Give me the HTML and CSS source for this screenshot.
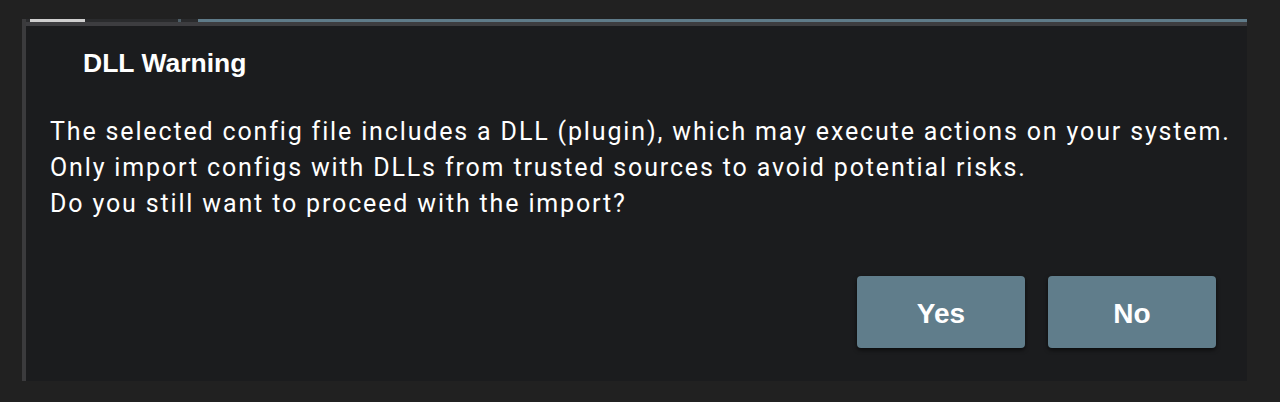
FILE: index.html
```html
<!DOCTYPE html>
<html lang="en">
<head>
<meta charset="utf-8">
<title>DLL Warning</title>
<link rel="stylesheet" href="styles.css">
</head>
<body>
<div class="dialog">
  <div class="tabline">
    <span class="seg seg-white"></span>
    <span class="seg seg-dot"></span>
    <span class="seg seg-blue"></span>
  </div>
  <div class="content">
    <h1 class="title">DLL Warning</h1>
    <p class="message">The selected config file includes a DLL (plugin), which may execute actions on your system.<br>Only import configs with DLLs from trusted sources to avoid potential risks.<br>Do you still want to proceed with the import?</p>
    <div class="actions">
      <button class="btn">Yes</button>
      <button class="btn">No</button>
    </div>
  </div>
</div>
</body>
</html>
```

FILE: styles.css
```css
html, body {
  margin: 0;
  padding: 0;
  background: #212121;
  height: 100%;
  overflow: hidden;
}

.dialog {
  margin: 19px 33px 0 22px;
  border-left: 4px solid #3b3b3d;
  background: #1b1c1e;
  display: flex;
  flex-direction: column;
}

.tabline {
  display: flex;
  align-items: stretch;
  height: 3px;
  background: #2a2b2d;
  border-bottom: 4px solid #3d3d40;
}

.seg {
  display: block;
}

.seg-white {
  margin-left: 4px;
  width: 55px;
  background: #cfcfcf;
}

.seg-dot {
  margin-left: 93px;
  width: 3px;
  background: #4d5d66;
}

.seg-blue {
  margin-left: 17px;
  flex: 1;
  background: #5f7b89;
}

.content {
  display: flex;
  flex-direction: column;
  padding: 22px 31px 33px 24px;
}

.title {
  margin: 0 0 0 33px;
  font-family: "Liberation Sans", Arial, sans-serif;
  font-weight: bold;
  font-size: 26.5px;
  line-height: 30px;
  color: #ffffff;
}

.message {
  margin: 36px 0 0 0;
  font-family: Roboto, "Noto Sans", sans-serif;
  font-size: 25px;
  letter-spacing: 1.85px;
  line-height: 36px;
  color: #ffffff;
  white-space: nowrap;
}

.actions {
  display: flex;
  justify-content: flex-end;
  gap: 23px;
  margin-top: 54px;
}

.btn {
  width: 168px;
  height: 72px;
  border: none;
  border-radius: 4px;
  background: #607d8b;
  color: #ffffff;
  font-family: "Liberation Sans", Arial, sans-serif;
  font-weight: bold;
  font-size: 28px;
  box-shadow: 0 2px 4px rgba(0, 0, 0, 0.6);
  padding: 3px 0 0 0;
}
```
